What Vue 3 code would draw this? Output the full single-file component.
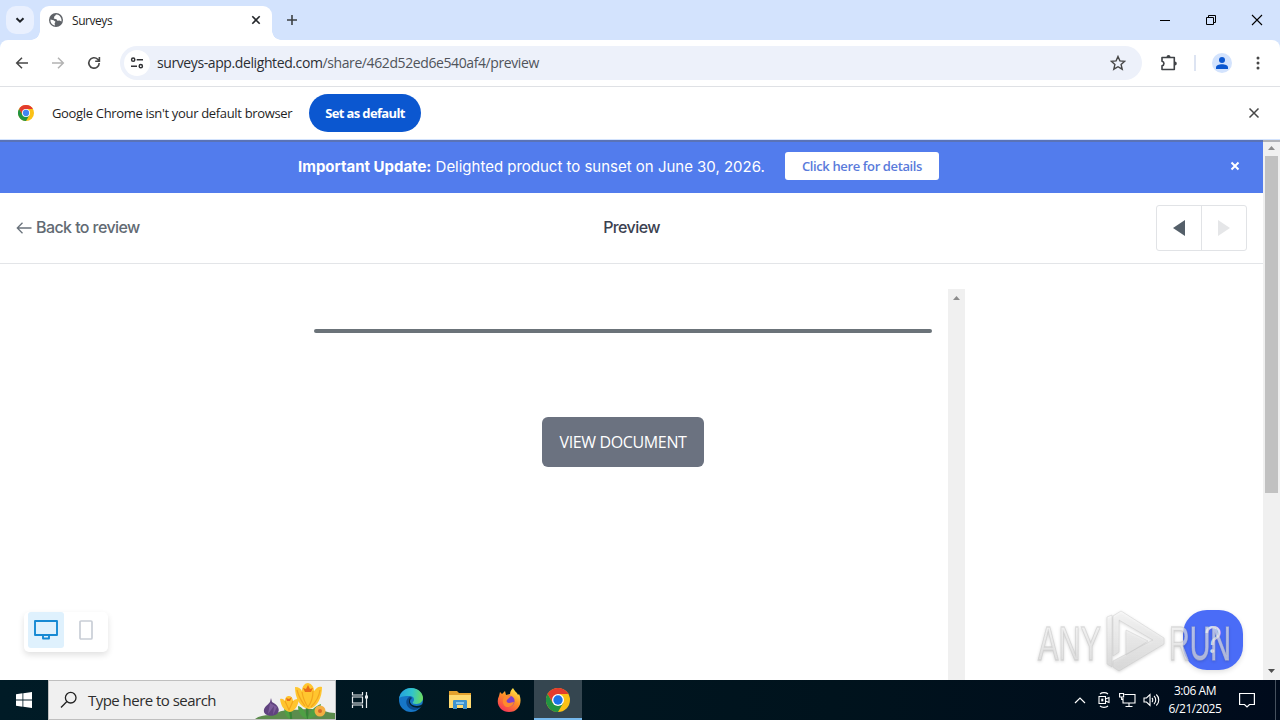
<script setup>
import { ref } from "vue";

const device = ref("desktop");
const host = "surveys-app.delighted.com";
const path = "/share/462d52ed6e540af4/preview";
</script>

<template>
  <div class="screen">
    <header class="tabstrip">
      <button class="tab-search">
        <svg width="28" height="28" viewBox="0 0 28 28"><path d="M10.500 12.200l3.500 3.500 3.500-3.500" fill="none" stroke="#1f2328" stroke-width="2" /></svg>
      </button>
      <div class="tab">
        <svg class="globe" width="14" height="14" viewBox="0 0 14 14">
          <circle cx="7" cy="7" r="7" fill="#5f6368" />
          <path d="M7.600 1.400C6 1.600 6.600 3 5.500 3.300 4.500 3.600 5.800 5 4.600 5.500L7.500 6.200 8.400 7.700 10.500 7.400 12.500 8.500C12.900 5 11 2 7.600 1.400zM1.500 6.500L4.600 7.200 6.500 8.700 5.600 10.300 6 12.500C3 12 1.200 9.500 1.500 6.500z" fill="#fff" />
        </svg>
        <span class="tab-title">Surveys</span>
        <svg class="tab-close" width="10" height="10" viewBox="0 0 10 10"><path d="M1.300 1.300l7.400 7.400M8.700 1.300L1.300 8.700" stroke="#24272b" stroke-width="1.600" /></svg>
      </div>
      <svg class="new-tab" width="12" height="12" viewBox="0 0 12 12"><path d="M6 1v10M1 6h10" stroke="#3c4043" stroke-width="1.600" /></svg>
      <div class="window-buttons">
        <svg width="12" height="12" viewBox="0 0 12 12"><path d="M1 6.500h10" stroke="#000" /></svg>
        <svg width="12" height="12" viewBox="0 0 12 12"><path d="M1.500 3.500h7v7h-7zM3.500 3.500v-2h7v7h-2" fill="none" stroke="#000" /></svg>
        <svg width="12" height="12" viewBox="0 0 12 12"><path d="M1 1l10 10M11 1L1 11" stroke="#000" stroke-width="1.100" /></svg>
      </div>
    </header>

    <div class="toolbar-wrap">
      <nav class="toolbar">
        <div class="nav-buttons">
          <svg width="14" height="14" viewBox="0 0 14 14"><path d="M13 7H2M7 1.700L1.700 7 7 12.300" fill="none" stroke="#474747" stroke-width="1.500" /></svg>
          <svg width="14" height="14" viewBox="0 0 14 14"><path d="M1 7h11M7 1.700L12.300 7 7 12.300" fill="none" stroke="#b3b3b3" stroke-width="1.500" /></svg>
          <svg width="14" height="14" viewBox="0 0 14 14"><path d="M12.200 7A5.200 5.200 0 1 1 10.700 3.300L12.300 5M12.400 1v4.200H8.200" fill="none" stroke="#474747" stroke-width="1.600" /></svg>
        </div>
        <div class="omnibox">
          <span class="site-info">
            <svg width="14" height="14" viewBox="0 0 14 14" fill="none" stroke="#303134" stroke-width="1.500">
              <circle cx="3.200" cy="3.700" r="1.600" /><path d="M6.700 3.700H13M1 10.200h6" /><circle cx="10.800" cy="10.200" r="1.600" />
            </svg>
          </span>
          <span class="url"><span class="host">{{ host }}</span><span class="path">{{ path }}</span></span>
          <svg class="star" width="16" height="16" viewBox="0 0 16 16"><path d="M8 1.500l1.900 4.400 4.800.4-3.600 3.200 1.100 4.700L8 11.700l-4.200 2.500 1.100-4.700-3.600-3.200 4.800-.4z" fill="none" stroke="#474747" stroke-width="1.400" /></svg>
        </div>
        <svg class="extensions" width="18" height="18" viewBox="0 0 18 18">
          <path d="M2 3.500h12.300V15.500H2V11.700c2.600-.4 2.600-4 0-4.400z" fill="none" stroke="#3f4246" stroke-width="1.600" stroke-linejoin="round" />
          <path d="M6.500 3a2 2 0 0 1 4 0zM14.800 7.500a2 2 0 0 1 0 4z" fill="#3f4246" />
        </svg>
        <span class="divider"></span>
        <svg class="profile" width="20" height="20" viewBox="0 0 20 20">
          <circle cx="10" cy="10" r="10" fill="#d3e3fd" /><circle cx="10" cy="7" r="3" fill="#0b57d0" />
          <path d="M4 16v-1.500c0-2 3-3.200 6-3.200s6 1.200 6 3.200V16z" fill="#0b57d0" />
        </svg>
        <svg class="menu" width="4" height="16" viewBox="0 0 4 16" fill="#474747"><circle cx="2" cy="3" r="1.500" /><circle cx="2" cy="8" r="1.500" /><circle cx="2" cy="13" r="1.500" /></svg>
      </nav>
    </div>

    <div class="infobar">
      <svg width="16" height="16" viewBox="0 0 24 24">
        <circle cx="12" cy="12" r="12" fill="#fbc116" />
        <path d="M1.600 6A12 12 0 0 1 22.400 6H12L6.800 15z" fill="#e33b2e" />
        <path d="M1.600 6A12 12 0 0 0 12 24L17.200 15H6.800z" fill="#229342" />
        <circle cx="12" cy="12" r="6" fill="#fff" /><circle cx="12" cy="12" r="4.700" fill="#4285f4" />
      </svg>
      <span class="info-text">Google Chrome isn't your default browser</span>
      <button class="set-default"><span>Set as default</span></button>
      <svg class="info-close" width="12" height="12" viewBox="0 0 12 12"><path d="M1.500 1.500l9 9M10.500 1.500l-9 9" stroke="#474747" stroke-width="1.500" /></svg>
    </div>

    <div class="viewport">
      <main class="page">
        <div class="banner">
          <span class="banner-text"><b>Important Update:</b> <span class="banner-rest">Delighted product to sunset on June 30, 2026.</span></span>
          <a class="details"><span>Click here for details</span></a>
          <svg class="banner-close" width="10" height="10" viewBox="0 0 10 10"><path d="M1.500 1.500l7 7M8.500 1.500l-7 7" stroke="#fff" stroke-width="2" /></svg>
        </div>
        <div class="preview-head">
          <a class="back">
            <svg width="16" height="14" viewBox="0 0 16 14"><path d="M15.500 7H1.500M6.500 1.800L1.300 7l5.200 5.200" fill="none" stroke="#69727b" stroke-width="1.300" /></svg>
            <span>Back to review</span>
          </a>
          <h1>Preview</h1>
          <div class="pager">
            <span><svg width="14" height="18" viewBox="0 0 14 18"><path d="M13 1v16L1 9z" fill="#545f69" /></svg></span>
            <span><svg width="14" height="18" viewBox="0 0 14 18"><path d="M1 1v16l12-8z" fill="#e5e6e8" /></svg></span>
          </div>
        </div>
        <section class="stage">
          <div class="survey">
            <div class="survey-body">
              <div class="progress"></div>
              <button class="view-doc"><span>VIEW DOCUMENT</span></button>
            </div>
            <div class="frame-scroll">
              <svg width="7" height="4" viewBox="0 0 7 4"><path d="M0 4L3.500 0 7 4z" fill="#8c8c8c" /></svg>
            </div>
          </div>
        </section>

        <div class="devices">
          <span :class="['device', { active: device === 'desktop' }]">
            <svg width="24" height="22" viewBox="0 0 24 22"><path d="M1 2h22v14H1zM9 16v3.500h6V16" fill="none" stroke="#1689d3" stroke-width="1.900" stroke-linejoin="round" /></svg>
          </span>
          <span :class="['device', { active: device === 'phone' }]">
            <svg width="14" height="20" viewBox="0 0 14 20"><rect x="1" y="1" width="12" height="18" rx="1" fill="none" stroke="#c9ced6" stroke-width="1.700" /></svg>
          </span>
        </div>

        <div class="help">?</div>
        <svg class="watermark" width="200" height="66" viewBox="0 0 200 66">
          <defs>
            <linearGradient id="fade" x1="0" y1="0" x2="0" y2="1">
              <stop offset="0" stop-color="#fff" stop-opacity=".6" />
              <stop offset="1" stop-color="#d6d6d6" stop-opacity=".7" />
            </linearGradient>
          </defs>
          <g class="mark" fill="url(#fade)" stroke="#c4c4c4" stroke-opacity=".5" stroke-width=".8">
            <text x="3" y="52" textLength="63" lengthAdjust="spacingAndGlyphs">ANY</text>
            <text x="134" y="52" textLength="62" lengthAdjust="spacingAndGlyphs">RUN</text>
            <path d="M72 9l5-2v52l-5-3z" />
            <path fill-rule="evenodd" d="M78 8l8-5 43 27v6L84 63l-6-4v-6l40-21-34-20v32l-6 4zM91 22v25l22-14z" />
          </g>
        </svg>
      </main>
      <aside class="page-scroll">
        <svg width="7" height="4" viewBox="0 0 7 4"><path d="M0 4L3.500 0 7 4z" fill="#8c8c8c" /></svg>
        <div class="thumb"></div>
        <svg class="down" width="7" height="4" viewBox="0 0 7 4"><path d="M0 0h7L3.500 4z" fill="#505050" /></svg>
      </aside>
    </div>

    <footer class="taskbar">
      <div class="start">
        <svg width="16" height="16" viewBox="0 0 16 16" fill="#fff"><path d="M0 2.200l6.500-.9v6.300H0zM7.300 1.200L16 0v7.600H7.300zM0 8.400h6.500v6.300L0 13.800zM7.300 8.400H16V16l-8.700-1.200z" /></svg>
      </div>
      <div class="search">
        <svg width="18" height="18" viewBox="0 0 18 18" fill="none" stroke="#222" stroke-width="1.300"><circle cx="10.700" cy="6.700" r="5.300" /><path d="M6.900 10.500L1 16.500" /></svg>
        <span>Type here to search</span>
        <svg class="flowers" width="80" height="38" viewBox="0 0 80 38">
          <path d="M0 38c4-3 9-4 15-4 6-1 10-5 19-5 10 0 13-1 22-1 10 0 17 4 24 4v6z" fill="#5c8c4d" />
          <path d="M16 17l1 4c6 3 9 8 5 12-4 3-12 2-13-2-1-5 4-7 6-10z" fill="#60437f" />
          <path d="M15 22l-2 11 6-8-1 9 4-8" fill="#7c5c9b" />
          <path d="M35 27l1 11M51 20c2 7 1 12 1 18" stroke="#398538" stroke-width="2.500" />
          <path d="M35 38c0-8-4-10-6-11 1 5 1 8 6 11zM52 38c-1-8-5-12-9-13 0 6 3 11 9 13zM53 38c1-9 8-13 13-15-1 8-5 13-13 15z" fill="#4fa044" />
          <path d="M25 18c3-1 4 1 5 2 0-4 2-5 4-5 2 0 4 2 4 5 2-2 4-2 6-2-1 7-4 12-9 13-6-1-9-6-10-13z" fill="#ffc42e" />
          <path d="M40 6c4 0 6 2 7 4 0-5 3-8 6-8 4 1 6 4 6 8 3-4 5-5 8-4 0 10-4 20-13 22-9-1-14-11-14-22z" fill="#ffc62f" />
          <path d="M47 11c1 6 3 11 6 15M58 10c0 7-2 12-5 16M30 20l4 9 4-9M42 9c2 8 5 12 8 16M65 9c-1 8-5 13-9 17" fill="none" stroke="#f3a51d" stroke-width="1.200" />
          <path d="M48 7l3 1 2-4 2 4 3-1-2 4h-6zM31 17l3 1 3-2-2 4h-3z" fill="#e96d18" />
          <circle cx="65" cy="30" r="5.500" fill="#f4af43" /><circle cx="65" cy="30" r="2" fill="#d66b27" />
        </svg>
      </div>
      <div class="app task-view">
        <svg width="18" height="18" viewBox="0 0 18 18" fill="none" stroke="#e7ecee" stroke-width="1.200"><path d="M1.500 1v3h10V1M1.500 17v-3h10v3M1.500 6h10v6h-10zM15.500 1v16" /><path d="M14 4.500h3v3h-3z" fill="#e7ecee" stroke="none" /></svg>
      </div>
      <div class="app">
        <svg width="24" height="24" viewBox="0 0 24 24">
          <defs><linearGradient id="edge" x1="0" x2="1" y1=".2" y2=".3"><stop stop-color="#239fdf" /><stop offset=".55" stop-color="#31c4cc" /><stop offset="1" stop-color="#69db63" /></linearGradient></defs>
          <circle cx="12" cy="12" r="12" fill="#1676c7" />
          <path d="M0 11C1 4 6 0 12 0c8 0 12 6 12 10 0 5-5 6-7 6-3 0-4-1-3-2 2-2 1-6-3-6C6 8 1 8 0 11z" fill="url(#edge)" />
          <path d="M10 9c-5 3-3 12 5 13 3 0 6-2 7-4-4 2-10 1-11-3-.5-3 2-4 2-5-.5-1-2-1.500-3-1z" fill="#0b4b8e" />
          <path d="M12.500 9.500c-2 1-2 4-1 5.500 2 3.500 7 3.500 10 2.300l2-1.300v2l-1.500 1c-4 1.500-11 .5-12-5 0-3 1-4 2.500-4.500z" fill="#031f2a" />
        </svg>
      </div>
      <div class="app">
        <svg width="22" height="20" viewBox="0 0 22 20">
          <path d="M0 1h8l2 2h12v5H0z" fill="#e4a22e" /><path d="M0 5h22v13H0z" fill="#ffda70" />
          <path d="M4 19v-8c0-1 1-1 1-1h12s1 0 1 1v8h-4v-4H8v4z" fill="#3d92ce" /><path d="M7 12h8v2H7z" fill="#83c5ed" />
        </svg>
      </div>
      <div class="app">
        <svg width="24" height="24" viewBox="0 0 24 24">
          <defs><linearGradient id="fox" x1=".8" y1="0" x2=".2" y2="1"><stop stop-color="#fff04c" /><stop offset=".45" stop-color="#ff9025" /><stop offset="1" stop-color="#f52d5c" /></linearGradient></defs>
          <path d="M3 4l2 2 3-3 1 4 4-1c0-3 2-5 3-6 2 4 4 4 5 7l1-1c4 8 0 18-10 18C4 24-2 16 2 8z" fill="url(#fox)" />
          <circle cx="12" cy="13" r="5.600" fill="#8041ca" />
          <path d="M7 9c2-2 5-2 7-1l-3 3c-2 1-2 4 1 4 2 0 3-1 5-1-1 4-4 5-6 5-4 0-7-5-4-10z" fill="#ff8a2d" />
        </svg>
      </div>
      <div class="app current">
        <svg width="24" height="24" viewBox="0 0 24 24">
          <circle cx="12" cy="12" r="12" fill="#fbc116" />
          <path d="M1.600 6A12 12 0 0 1 22.400 6H12L6.800 15z" fill="#e33b2e" />
          <path d="M1.600 6A12 12 0 0 0 12 24L17.200 15H6.800z" fill="#229342" />
          <circle cx="12" cy="12" r="6" fill="#fff" /><circle cx="12" cy="12" r="4.700" fill="#1a73e8" />
        </svg>
      </div>
      <div class="tray">
        <svg width="12" height="8" viewBox="0 0 12 8"><path d="M1 7l5-5 5 5" fill="none" stroke="#fff" stroke-width="1.200" /></svg>
        <svg class="meet" width="14" height="18" viewBox="0 0 14 18" fill="none" stroke="#fff" stroke-width="1.100"><path d="M3 3c2-1.800 6-1.800 8 0M3 15c2 1.800 6 1.800 8 0M2 5.500h6.500v7H2zM8.500 8L12 6.500v5L8.500 10" /><path d="M4.800 8.200h1v1.600h-1z" /></svg>
        <svg width="17" height="16" viewBox="0 0 17 16" fill="none" stroke="#fff" stroke-width="1.100"><path d="M5.500 2.500h10.500v8.500H4V6M10 11v3.400M6.500 14.500h7M.6 1.500h4v3.500h-4zM2.600 5v2.500H4" /></svg>
        <svg class="volume" width="17" height="14" viewBox="0 0 17 14" fill="none" stroke="#fff" stroke-width="1.100"><path d="M1 5h2.500L7 1.500v11L3.500 9H1zM9 5c1 1 1 3 0 4M11 3c2.300 2 2.300 6 0 8M13.300 1.500c3.300 3 3.300 8 0 11" /></svg>
        <div class="clock"><span>3:06 AM</span><span>6/21/2025</span></div>
        <svg class="notify" width="16" height="16" viewBox="0 0 16 16"><path d="M.6 1.500h14.800v11H10.500L8 15l-2.500-2.500H.6z" fill="none" stroke="#fff" stroke-width="1.200" /></svg>
        <span class="show-desktop"></span>
      </div>
    </footer>
  </div>
</template>

<style>
body {
  overflow: hidden;
}
</style>

<style scoped>
.screen {
  width: 1280px;
  height: 720px;
  display: flex;
  flex-direction: column;
  background: #fff;
  font-family: "Open Sans", "Noto Sans", sans-serif;
  overflow: hidden;
}

svg {
  display: block;
  flex: none;
}

span,
b {
  white-space: nowrap;
}

button {
  border: 0;
  padding: 0;
  font-family: inherit;
}

.tabstrip {
  height: 40px;
  flex: none;
  display: flex;
  background: #d3e3fd;
}

.tab-search {
  width: 28px;
  height: 28px;
  margin: 6px 6px 0;
  border-radius: 10px;
  background: #e9f0fe;
}

.tab {
  width: 232px;
  height: 34px;
  margin-top: 6px;
  padding: 0 11px 6px 9px;
  box-sizing: border-box;
  display: flex;
  align-items: center;
  background: #fff;
  border-radius: 9px 9px 0 0;
  position: relative;
}

.tab::before,
.tab::after {
  content: "";
  position: absolute;
  bottom: 0;
  width: 9px;
  height: 9px;
}

.tab::before {
  left: -9px;
  background: radial-gradient(circle at 0 0, transparent 8.5px, #fff 9px);
}

.tab::after {
  right: -9px;
  background: radial-gradient(circle at 100% 0, transparent 8.5px, #fff 9px);
}

.tab-title {
  flex: 1;
  margin-left: 9px;
  font-size: 12px;
  letter-spacing: -0.45px;
  color: #1f1f1f;
}

.new-tab {
  margin: 14px 0 0 14px;
}

.window-buttons {
  display: flex;
  gap: 34px;
  margin: 14px 17px 0 auto;
}

.toolbar-wrap {
  flex: none;
  background: #d3e3fd;
}

.toolbar {
  height: 46px;
  display: flex;
  align-items: center;
  border-bottom: 1px solid #dfe1e5;
  border-radius: 8px 8px 0 0;
  background: #fff;
}

.nav-buttons {
  display: flex;
  gap: 22px;
  margin-left: 15px;
}

.omnibox {
  width: 1022px;
  height: 34px;
  margin-left: 19px;
  display: flex;
  align-items: center;
  border-radius: 17px;
  background: #edf1fa;
}

.site-info {
  width: 26px;
  height: 26px;
  margin: 0 7px 0 4px;
  border-radius: 50%;
  background: #fff;
  display: flex;
  align-items: center;
  justify-content: center;
}

.url {
  padding-bottom: 2px;
  font-size: 14px;
  color: #2b2e33;
  letter-spacing: -0.4px;
}

.path {
  color: #50545a;
}

.star {
  margin: 0 16px 0 auto;
}

.extensions {
  margin-left: 18px;
}

.divider {
  width: 2px;
  height: 16px;
  margin-left: 16px;
  background: #dde4f2;
}

.profile {
  margin-left: 16px;
}

.menu {
  margin-left: 24px;
}

.infobar {
  height: 53px;
  flex: none;
  box-sizing: border-box;
  display: flex;
  align-items: center;
  padding: 0 20px 1px 18px;
  border-bottom: 1px solid #d3e3fd;
}

.info-text {
  margin-left: 18px;
  width: 257px;
  font-size: 13px;
  letter-spacing: -0.33px;
  color: #1f1f1f;
}

.set-default {
  width: 112px;
  height: 38px;
  border-radius: 19px;
  background: #0b57d0;
  color: #fff;
  font-size: 13px;
  font-weight: 700;
  letter-spacing: -0.65px;
}

.info-close {
  margin-left: auto;
}

.viewport {
  flex: 1;
  min-height: 0;
  display: flex;
  position: relative;
}

.viewport::before {
  content: "";
  position: absolute;
  z-index: 2;
  left: 0;
  right: 0;
  top: 0;
  height: 2px;
  background: rgba(100, 105, 115, 0.45);
}

.page {
  width: 1263px;
  display: flex;
  flex-direction: column;
  position: relative;
}

.banner {
  height: 53px;
  flex: none;
  box-sizing: border-box;
  display: flex;
  align-items: center;
  padding: 0 23px 1px 298px;
  background: #527ced;
  color: #fff;
}

.banner-text {
  width: 487px;
  padding-top: 1px;
  font-family: Inter, sans-serif;
  font-size: 15px;
  letter-spacing: -0.01px;
}

.details {
  width: 154px;
  height: 28px;
  border-radius: 3px;
  background: #fff;
  color: #5a7bdb;
  display: flex;
  align-items: center;
  justify-content: center;
  font-size: 13px;
  font-weight: 600;
  letter-spacing: -0.38px;
}

.banner-close {
  margin-left: auto;
}

.preview-head {
  height: 70px;
  flex: none;
  display: grid;
  grid-template-columns: 1fr auto 1fr;
  align-items: center;
  padding: 0 16px;
  border-bottom: 1px solid #e3e5e8;
  font-family: Inter, sans-serif;
}

.back {
  display: flex;
  align-items: center;
  gap: 4px;
  font-size: 16px;
  font-weight: 500;
  letter-spacing: -0.58px;
  color: #626a73;
}

.back span,
h1 {
  padding-bottom: 2px;
}

h1 {
  margin: 0;
  font-size: 16px;
  font-weight: 500;
  letter-spacing: -0.6px;
  color: #3b4150;
}

.pager {
  justify-self: end;
  width: 89px;
  height: 44px;
  display: flex;
  border: 1px solid #e1e3e6;
  border-radius: 3px;
}

.pager span {
  flex: 1;
  display: flex;
  align-items: center;
  justify-content: center;
}

.pager span + span {
  border-left: 1px solid #e1e3e6;
}

.stage {
  flex: 1;
  padding: 25px 0 0 298px;
  display: flex;
}

.survey {
  width: 667px;
  display: flex;
}

.survey-body {
  width: 650px;
  padding: 40px 16px 0;
  box-sizing: border-box;
  display: flex;
  flex-direction: column;
  align-items: center;
}

.progress {
  width: 100%;
  height: 4px;
  border-radius: 2px;
  background: #6b7379;
}

.view-doc {
  width: 162px;
  height: 50px;
  margin-top: 84px;
  border-radius: 6px;
  background: #6b7280;
  color: #fff;
  font-size: 16px;
  letter-spacing: -0.36px;
}

.frame-scroll,
.page-scroll {
  width: 17px;
  background: #f0f0f0;
  display: flex;
  flex-direction: column;
  align-items: center;
}

.frame-scroll {
  padding-top: 7px;
  box-sizing: border-box;
}

.page-scroll svg {
  margin-top: 6px;
}

.thumb {
  width: 13px;
  height: 337px;
  margin-top: 6px;
  background: #c1c1c1;
}

.page-scroll .down {
  margin: auto 0 7px;
}

.devices {
  position: absolute;
  left: 24px;
  top: 472px;
  height: 40px;
  width: 84px;
  padding: 0 4px;
  box-sizing: border-box;
  display: flex;
  gap: 4px;
  border-radius: 5px;
  background: #fff;
  box-shadow: 0 3px 6px rgba(0, 0, 0, 0.12);
}

.device {
  width: 36px;
  height: 36px;
  display: flex;
  align-items: center;
  justify-content: center;
  border-radius: 3px;
}

.device.active {
  background: #dff1fd;
}

.help {
  position: absolute;
  left: 1183px;
  top: 470px;
  width: 60px;
  height: 60px;
  border-radius: 24px;
  background: #4a6cf7;
  color: #dce3ff;
  box-shadow: 0 2px 5px rgba(0, 0, 0, 0.12);
  font: 300 37px/60px Inter, sans-serif;
  text-align: center;
}

.watermark {
  position: absolute;
  left: 1035px;
  top: 468px;
  overflow: visible;
}

.watermark text {
  font: 49px "Liberation Sans", sans-serif;
  stroke-width: 1.3px;
}

.mark {
  filter: drop-shadow(0 1px 1.5px rgba(0, 0, 0, 0.22));
}

.taskbar {
  height: 40px;
  flex: none;
  display: flex;
  background: linear-gradient(90deg, #001b26, #00131d 65%, #000b1c);
}

.start {
  width: 48px;
  display: flex;
  align-items: center;
  justify-content: center;
}

.search {
  width: 288px;
  box-sizing: border-box;
  display: flex;
  align-items: center;
  padding-left: 11px;
  border: 1px solid #bfbfbf;
  background: #f0f0f0;
  color: #2d2d2d;
  font-size: 15px;
  letter-spacing: -0.53px;
  overflow: hidden;
}

.search span {
  margin-left: 10px;
}

.flowers {
  margin-left: auto;
}

.app {
  width: 48px;
  margin-right: 1px;
  display: flex;
  align-items: center;
  justify-content: center;
}

.task-view {
  margin-right: 3px;
}

.app.current {
  margin: 0;
  box-sizing: border-box;
  padding-top: 2px;
  border-bottom: 2px solid #76b9ed;
  background: #354650;
}

.tray {
  margin-left: auto;
  display: flex;
  align-items: center;
}

.tray svg + svg {
  margin-left: 8px;
}

.tray .meet {
  margin-left: 11px;
}

.tray .volume {
  margin-left: 7px;
}

.clock {
  width: 60px;
  margin-left: 5px;
  display: flex;
  flex-direction: column;
  align-items: center;
  color: #fff;
  font-size: 12px;
  line-height: 18px;
  letter-spacing: -0.45px;
}

.tray .notify {
  margin-left: 14px;
}

.show-desktop {
  height: 40px;
  width: 4px;
  margin-left: 20px;
  border-left: 1px solid #46515e;
}
</style>
